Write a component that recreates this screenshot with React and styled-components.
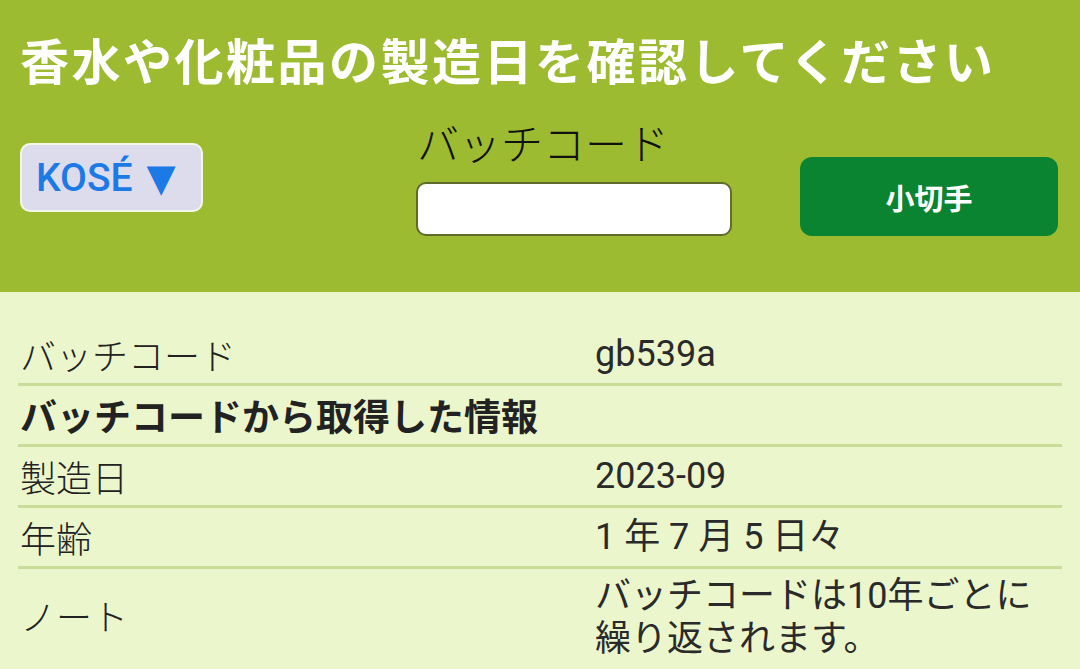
import React from "react";
import styled, { createGlobalStyle } from "styled-components";

const GlobalStyle = createGlobalStyle`
  html, body {
    margin: 0;
    padding: 0;
    background: #ecf6cc;
    font-family: "Roboto", "Noto Sans CJK JP", sans-serif;
  }
`;

const Header = styled.header`
  height: 292px;
  box-sizing: border-box;
  background: #9dbb30;
  padding: 30px 20px 0 20px;
`;

const Title = styled.h1`
  margin: 0;
  font-family: "Noto Sans CJK JP", sans-serif;
  font-size: 49px;
  line-height: 58px;
  font-weight: 700;
  color: #ffffff;
  letter-spacing: 2.5px;
  white-space: nowrap;
`;

const Controls = styled.div`
  display: flex;
  align-items: flex-start;
  margin-top: 30px;
`;

const Select = styled.div`
  margin-top: 25px;
  width: 183px;
  height: 69px;
  box-sizing: border-box;
  border: 2px solid #f4f6e8;
  border-radius: 10px;
  background: #dddcec;
  display: flex;
  align-items: center;
  padding-left: 14px;
  gap: 14px;
  color: #1c7ae6;
  font-size: 39px;
  font-weight: 500;
`;

const Arrow = styled.span`
  font-size: 38px;
  font-family: "DejaVu Sans", sans-serif;
`;

const Field = styled.div`
  margin-left: 213px;
  display: flex;
  flex-direction: column;
  gap: 16px;
`;

const FieldLabel = styled.label`
  font-family: "Noto Sans CJK JP", sans-serif;
  font-size: 42px;
  line-height: 48px;
  font-weight: 300;
  color: #111;
  padding-left: 1px;
`;

const Input = styled.input`
  width: 316px;
  height: 54px;
  box-sizing: border-box;
  border: 2px solid #5f6a2c;
  border-radius: 10px;
  background: #fff;
  outline: none;
`;

const Button = styled.button`
  margin-top: 39px;
  margin-left: 68px;
  width: 258px;
  height: 79px;
  border: none;
  border-radius: 12px;
  background: #0b8432;
  color: #fff;
  font-family: "Noto Sans CJK JP", sans-serif;
  font-size: 29px;
  font-weight: 700;
  cursor: pointer;
`;

const Table = styled.section`
  padding: 33px 18px 0 18px;
`;

const Row = styled.div`
  display: grid;
  grid-template-columns: 575px 1fr;
  align-items: center;
  min-height: 58px;
  padding: 0 2px;
  border-bottom: ${(p) => (p.$last ? "none" : "3px solid #c9dc98")};
`;

const Label = styled.div`
  font-family: "Noto Sans CJK JP", sans-serif;
  font-size: ${(p) => (p.$bold ? "37px" : "36px")};
  font-weight: ${(p) => (p.$bold ? 700 : 300)};
  color: #222;
  white-space: nowrap;
`;

const Value = styled.div`
  font-family: "Roboto", "Noto Sans CJK JP", sans-serif;
  font-size: 36px;
  line-height: 43px;
  color: #2a2a2a;
  padding: ${(p) => (p.$multi ? "6px 0 0" : "0")};
`;

const rows = [
  { label: "バッチコード", value: "gb539a" },
  { label: "バッチコードから取得した情報", bold: true },
  { label: "製造日", value: "2023-09" },
  { label: "年齢", value: "1 年 7 月 5 日々" },
  {
    label: "ノート",
    value: "バッチコードは10年ごとに繰り返されます。",
    multi: true,
  },
];

const App = () => {
  return (
    <>
      <GlobalStyle />
      <Header>
        <Title>香水や化粧品の製造日を確認してください</Title>
        <Controls>
          <Select>
            KOSÉ <Arrow>▼</Arrow>
          </Select>
          <Field>
            <FieldLabel>バッチコード</FieldLabel>
            <Input />
          </Field>
          <Button>小切手</Button>
        </Controls>
      </Header>
      <Table>
        {rows.map((r, i) => (
          <Row key={i} $last={i === rows.length - 1}>
            <Label $bold={r.bold}>{r.label}</Label>
            <Value $multi={r.multi}>{r.value}</Value>
          </Row>
        ))}
      </Table>
    </>
  );
};

export default App;
